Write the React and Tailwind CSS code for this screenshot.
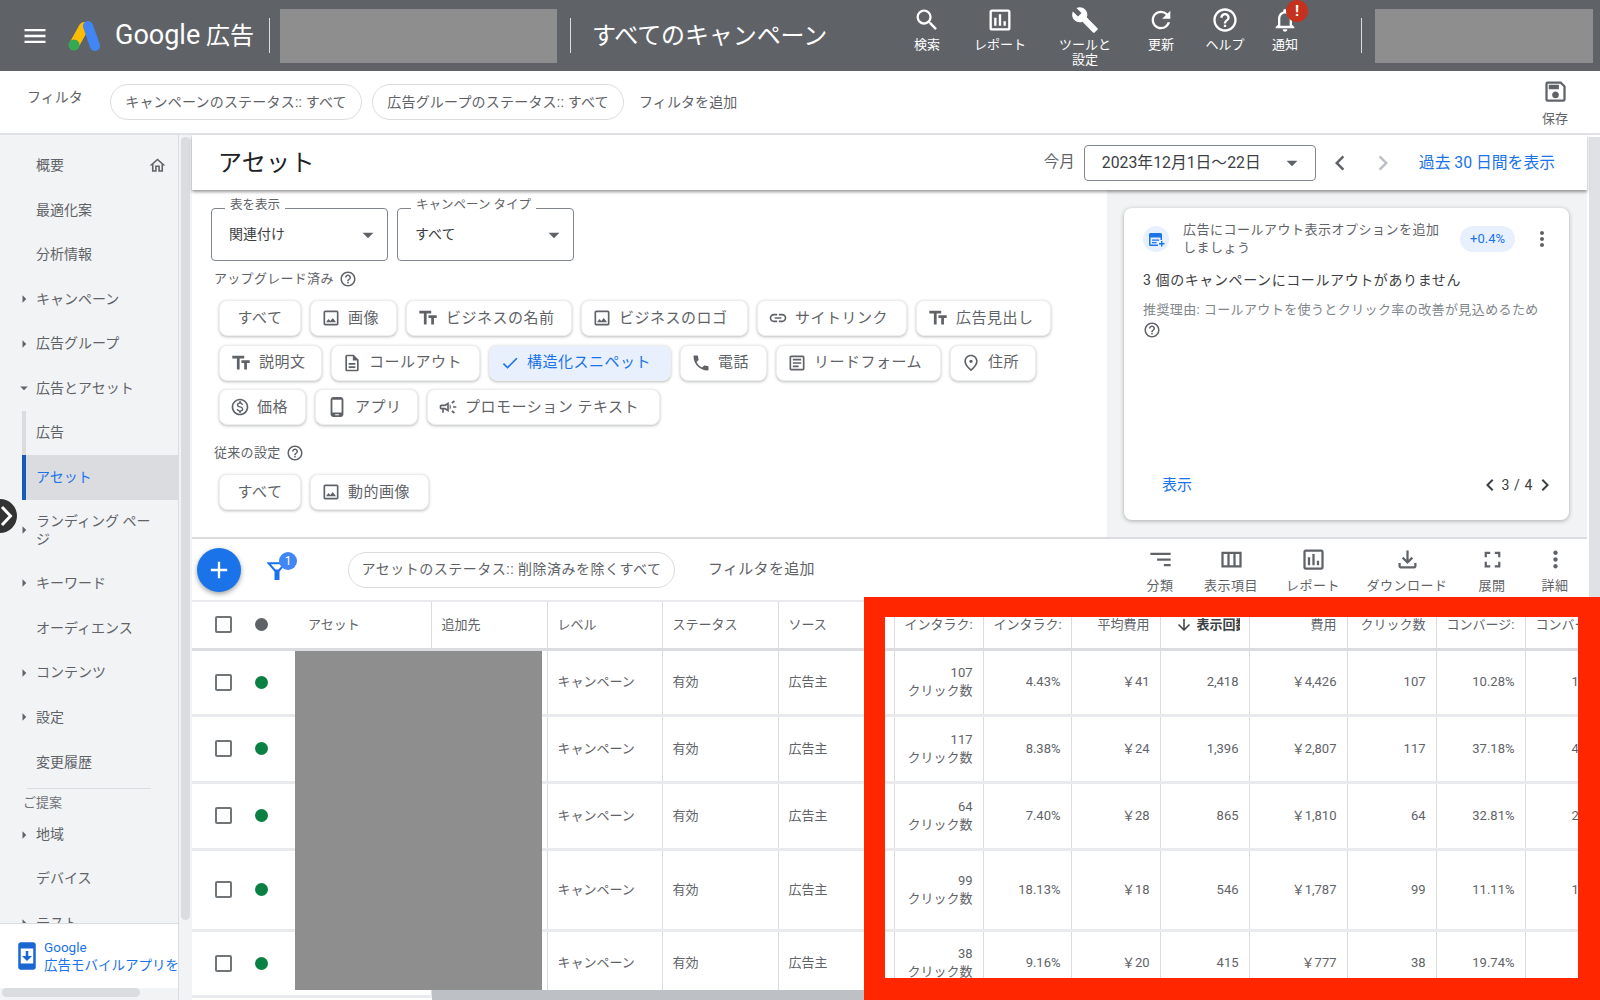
import {
  MdMenu,
  MdSearch,
  MdOutlineAssessment,
  MdBuild,
  MdRefresh,
  MdHelpOutline,
  MdNotificationsNone,
  MdOutlineSave,
  MdOutlineHome,
  MdArrowRight,
  MdArrowDropDown,
  MdChevronLeft,
  MdChevronRight,
  MdOutlineImage,
  MdTextFields,
  MdLink,
  MdOutlineDescription,
  MdCheck,
  MdPhone,
  MdOutlineArticle,
  MdOutlinePlace,
  MdOutlineMonetizationOn,
  MdOutlinePhoneAndroid,
  MdOutlineCampaign,
  MdMoreVert,
  MdAdd,
  MdSort,
  MdOutlineViewColumn,
  MdOutlineFileDownload,
  MdFullscreen,
  MdArrowDownward,
  MdSecurityUpdate,
} from 'react-icons/md'

const navTop = [
  { label: '概要', home: true },
  { label: '最適化案' },
  { label: '分析情報' },
  { label: 'キャンペーン', arrow: 'right' },
  { label: '広告グループ', arrow: 'right' },
  { label: '広告とアセット', arrow: 'down' },
]

const navBottom = [
  { label: 'キーワード', arrow: 'right' },
  { label: 'オーディエンス' },
  { label: 'コンテンツ', arrow: 'right' },
  { label: '設定', arrow: 'right' },
  { label: '変更履歴' },
]

const headerActions = [
  { label: '検索', icon: MdSearch, cls: 'w-[73px]' },
  { label: 'レポート', icon: MdOutlineAssessment, cls: 'w-[73px]' },
  { label: 'ツールと設定', icon: MdBuild, cls: 'w-[97px]', narrow: true },
  { label: '更新', icon: MdRefresh, cls: 'w-[55px]' },
  { label: 'ヘルプ', icon: MdHelpOutline, cls: 'w-[73px]' },
  { label: '通知', icon: MdNotificationsNone, cls: 'w-[47px]', badge: true },
]

const chipRows = [
  [
    { label: 'すべて', cls: 'w-[82px]' },
    { label: '画像', cls: 'w-[87px]', icon: MdOutlineImage, size: 20 },
    { label: 'ビジネスの名前', cls: 'w-[166px]', icon: MdTextFields },
    { label: 'ビジネスのロゴ', cls: 'w-[167px]', icon: MdOutlineImage, size: 20 },
    { label: 'サイトリンク', cls: 'w-[150px]', icon: MdLink, size: 20 },
    { label: '広告見出し', cls: 'w-[135px]', icon: MdTextFields },
  ],
  [
    { label: '説明文', cls: 'w-[103px]', icon: MdTextFields },
    { label: 'コールアウト', cls: 'w-[149px]', icon: MdOutlineDescription, size: 20 },
    { label: '構造化スニペット', cls: 'w-[182px]', icon: MdCheck, size: 20, active: true },
    { label: '電話', cls: 'w-[87px]', icon: MdPhone, size: 20 },
    { label: 'リードフォーム', cls: 'w-[165px]', icon: MdOutlineArticle, size: 20 },
    { label: '住所', cls: 'w-[86px]', icon: MdOutlinePlace, size: 20 },
  ],
  [
    { label: '価格', cls: 'w-[87px]', icon: MdOutlineMonetizationOn, size: 20 },
    { label: 'アプリ', cls: 'w-[103px]', icon: MdOutlinePhoneAndroid },
    { label: 'プロモーション テキスト', cls: 'w-[233px]', icon: MdOutlineCampaign, size: 20 },
  ],
]

const legacyChips = [
  { label: 'すべて', cls: 'w-[82px]' },
  { label: '動的画像', cls: 'w-[119px]', icon: MdOutlineImage, size: 20 },
]

const tools = [
  { label: '分類', icon: MdSort, cls: 'w-[62px]', flip: true },
  { label: '表示項目', icon: MdOutlineViewColumn, cls: 'w-[80px]' },
  { label: 'レポート', icon: MdOutlineAssessment, cls: 'w-[84px]' },
  { label: 'ダウンロード', icon: MdOutlineFileDownload, cls: 'w-[104px]' },
  { label: '展開', icon: MdFullscreen, cls: 'w-[66px]' },
  { label: '詳細', icon: MdMoreVert, cls: 'w-[60px]' },
]

const rows = [
  { h: 'h-[66px]', cv: '107', rate: '4.43%', avg: '\uFFE541', imp: '2,418', cost: '\uFFE54,426', click: '107', conv: '10.28%', more: '1' },
  { h: 'h-[67px]', cv: '117', rate: '8.38%', avg: '\uFFE524', imp: '1,396', cost: '\uFFE52,807', click: '117', conv: '37.18%', more: '4' },
  { h: 'h-[67px]', cv: '64', rate: '7.40%', avg: '\uFFE528', imp: '865', cost: '\uFFE51,810', click: '64', conv: '32.81%', more: '2' },
  { h: 'h-[81px]', cv: '99', rate: '18.13%', avg: '\uFFE518', imp: '546', cost: '\uFFE51,787', click: '99', conv: '11.11%', more: '1' },
  { h: 'h-[66px]', cv: '38', rate: '9.16%', avg: '\uFFE520', imp: '415', cost: '\uFFE5777', click: '38', conv: '19.74%', more: '' },
]

const NavItem = ({ label, arrow, home, rowCls = 'h-[44.5px]' }) => (
  <div className={`flex items-center text-[14px] text-[#5f6368] ${rowCls}`}>
    <span className="flex w-[36px] justify-end">
      {arrow === 'right' && <MdArrowRight size={18} className="mr-[3px]" />}
      {arrow === 'down' && <MdArrowDropDown size={18} className="mr-[3px]" />}
    </span>
    <span>{label}</span>
    {home && <MdOutlineHome size={19} className="ml-auto mr-[11px]" />}
  </div>
)

const Chip = ({ label, cls, icon: Icon, size = 22, active }) => (
  <div
    className={`flex h-[36px] items-center gap-[7px] rounded-lg border border-[#eceef0] text-[15px] tracking-[0.5px] shadow-[0_1px_3px_rgba(60,64,67,0.35)] ${cls} ${
      active ? 'bg-[#e8f0fe] text-[#1a73e8]' : 'bg-white text-[#5f6368]'
    } ${Icon ? 'pl-[10px]' : 'justify-center'}`}
  >
    {Icon && <Icon size={size} className="shrink-0" />}
    <span className="whitespace-nowrap">{label}</span>
  </div>
)

const Select = ({ label, value }) => (
  <div className="relative flex h-[53px] w-[177px] items-center rounded border border-[#80868b] pl-[17px] pr-[6px] text-[14px] text-[#3c4043]">
    <span className="absolute -top-[12px] left-[13px] bg-white px-[5px] text-[12.5px] leading-[16px] text-[#5f6368]">{label}</span>
    <span>{value}</span>
    <MdArrowDropDown size={26} className="ml-auto text-[#5f6368]" />
  </div>
)

const Checkbox = () => <div className="h-[17px] w-[17px] rounded-[2px] border-2 border-[#70757a]" />

const Th = ({ children, right }) => (
  <th className={`overflow-hidden whitespace-nowrap border-l border-[#dadce0] px-[10px] text-[13px] font-normal text-[#5f6368] ${right ? 'text-right' : 'text-left'}`}>
    {children}
  </th>
)

const Td = ({ children, right }) => (
  <td className={`overflow-hidden whitespace-nowrap border-l border-[#dadce0] px-[10px] text-[13px] text-[#5f6368] ${right ? 'text-right' : 'text-left'}`}>
    {children}
  </td>
)

const App = () => {
  return (
    <div className="relative flex h-[1000px] w-[1600px] flex-col overflow-hidden bg-white font-[Roboto,'Noto_Sans_CJK_JP',sans-serif]">
      {/* Top bar */}
      <header className="flex h-[71px] shrink-0 items-center bg-[#5f6368] pl-[21px] text-white">
        <MdMenu size={28} />
        <svg width="32" height="30" viewBox="0 0 32 30" className="ml-[19px]">
          <line x1="16" y1="6" x2="6" y2="24" stroke="#fbbc04" strokeWidth="10" strokeLinecap="round" />
          <line x1="20" y1="5" x2="27" y2="25" stroke="#4285f4" strokeWidth="10" strokeLinecap="round" />
          <circle cx="6" cy="24" r="5.5" fill="#34a853" />
        </svg>
        <span className="ml-[15px] w-[91px] text-[27px] leading-none">Google</span>
        <span className="text-[24px] leading-none">広告</span>
        <div className="ml-[15px] h-[35px] w-px bg-[#dadce0]" />
        <div className="ml-[10px] h-[54px] w-[277px] bg-[#8e8e8e]" />
        <div className="ml-[13px] h-[35px] w-px bg-[#dadce0]" />
        <span className="ml-[21px] w-[298.5px] text-[24px] leading-none tracking-[-0.1px]">すべてのキャンペーン</span>
        {headerActions.map(({ label, icon: Icon, cls, narrow, badge }) => (
          <div key={label} className={`flex h-full shrink-0 flex-col items-center pt-[6px] ${cls}`}>
            <div className="relative">
              <Icon size={28} />
              {badge && (
                <span className="absolute -top-[6px] left-[15px] flex h-[22px] w-[22px] items-center justify-center rounded-full bg-[#c5311f] text-[15px] font-bold">!</span>
              )}
            </div>
            <span className={`mt-[3px] text-center text-[13px] leading-[15px] ${narrow ? 'w-[56px]' : ''}`}>{label}</span>
          </div>
        ))}
        <div className="ml-[52.5px] h-[35px] w-px bg-[#dadce0]" />
        <div className="ml-[13px] h-[54px] w-[218px] bg-[#8e8e8e]" />
      </header>

      {/* Filter bar */}
      <div className="flex h-[64px] shrink-0 items-center border-b-2 border-[#e0e2e5] pl-[27px] text-[14px] text-[#5f6368]">
        <span className="-mt-[10px] w-[83px]">フィルタ</span>
        <div className="flex h-[36px] w-[252px] items-center justify-center rounded-full border border-[#dadce0] tracking-[0.2px]">キャンペーンのステータス:: すべて</div>
        <div className="ml-[10px] flex h-[36px] w-[252px] items-center justify-center rounded-full border border-[#dadce0] tracking-[0.2px]">広告グループのステータス:: すべて</div>
        <span className="ml-[15px] tracking-[0.1px]">フィルタを追加</span>
        <div className="ml-auto flex w-[90px] flex-col items-center pt-[3px]">
          <MdOutlineSave size={27} />
          <span className="mt-[4px] text-[13px]">保存</span>
        </div>
      </div>

      <div className="flex min-h-0 flex-1">
        {/* Side nav */}
        <aside className="flex w-[179px] shrink-0 flex-col border-r border-[#dadce0] bg-[#f2f3f5]">
          <nav className="min-h-0 flex-1 overflow-hidden pt-[8.5px]">
            {navTop.map((item) => (
              <NavItem key={item.label} {...item} />
            ))}
            <div className="ml-[22px] flex h-[44.5px] items-center border-l-4 border-[#dadce0] pl-[10px] text-[14px] text-[#5f6368]">広告</div>
            <div className="ml-[22px] flex h-[44.5px] items-center border-l-4 border-[#185abc] bg-[#dadce0] pl-[10px] text-[14px] text-[#1a73e8]">アセット</div>
            <div className="flex h-[61.5px] items-center text-[14px] leading-[18px] text-[#5f6368]">
              <span className="flex w-[36px] justify-end">
                <MdArrowRight size={18} className="mr-[3px]" />
              </span>
              <span className="w-[120px]">ランディング ページ</span>
            </div>
            {navBottom.map((item) => (
              <NavItem key={item.label} {...item} rowCls="h-[44.7px]" />
            ))}
            <div className="ml-[27px] mr-[27px] mt-[4px] h-px bg-[#dadce0]" />
            <div className="ml-[23px] mt-[5px] text-[13px] leading-[18px] text-[#70757a]">ご提案</div>
            <NavItem label="地域" arrow="right" rowCls="h-[44.3px]" />
            <NavItem label="デバイス" rowCls="h-[44.3px]" />
            <NavItem label="テスト" arrow="right" rowCls="h-[44.3px]" />
          </nav>
          <div className="flex h-[65px] shrink-0 items-center overflow-hidden border-t border-[#dadce0] bg-white pl-[12px] text-[13.5px] leading-[18px] text-[#1a73e8]">
            <MdSecurityUpdate size={30} className="shrink-0 text-[#1967d2]" />
            <div className="ml-[2px] whitespace-nowrap">
              Google
              <br />
              広告モバイルアプリを入手
            </div>
          </div>
          <div className="h-[12px] shrink-0 bg-[#f2f3f5]">
            <div className="ml-[2px] h-[9px] w-[138px] rounded-full bg-[#dadce0]" />
          </div>
        </aside>
        <div className="w-[13px] shrink-0 bg-[#f2f3f5] pl-[2px] pt-[2px]">
          <div className="h-[783px] w-[9px] rounded-full bg-[#dadce0]" />
        </div>

        <main className="flex min-w-0 flex-1 flex-col">
          {/* Page title row */}
          <div className="relative z-10 flex h-[55px] shrink-0 items-center pl-[26px] pr-[32px] shadow-[0_2px_3px_rgba(0,0,0,0.4)]">
            <h1 className="text-[24px] font-normal tracking-[0.3px] text-[#202124]">アセット</h1>
            <span className="ml-auto text-[15.5px] text-[#5f6368]">今月</span>
            <div className="ml-[9px] flex h-[36px] w-[232px] items-center rounded border border-[#80868b] pl-[17px] pr-[10px] text-[15.8px] text-[#3c4043]">
              2023年12月1日〜22日
              <MdArrowDropDown size={26} className="ml-auto text-[#5f6368]" />
            </div>
            <MdChevronLeft size={30} className="ml-[9px] text-[#5f6368]" />
            <MdChevronRight size={30} className="ml-[13px] text-[#bdc1c6]" />
            <span className="ml-[21px] text-[15.8px] text-[#1a73e8]">過去 30 日間を表示</span>
          </div>

          <div className="flex h-[347px] shrink-0">
            {/* Asset type chips */}
            <section className="w-[915px] shrink-0">
              <div className="ml-[19px] mt-[18px] flex gap-[9px]">
                <Select label="表を表示" value="関連付け" />
                <Select label="キャンペーン タイプ" value="すべて" />
              </div>
              <div className="ml-[22px] mt-[9px] flex h-[18px] items-center gap-[5px] text-[13px] tracking-[0.3px] text-[#5f6368]">
                アップグレード済み
                <MdHelpOutline size={18} />
              </div>
              <div className="ml-[27px] mt-[12px] flex flex-col gap-[8.5px]">
                {chipRows.map((row, i) => (
                  <div key={i} className="flex gap-[9px]">
                    {row.map((chip) => (
                      <Chip key={chip.label} {...chip} />
                    ))}
                  </div>
                ))}
              </div>
              <div className="ml-[22px] mt-[19px] flex h-[18px] items-center gap-[5px] text-[13px] tracking-[0.3px] text-[#5f6368]">
                従来の設定
                <MdHelpOutline size={18} />
              </div>
              <div className="ml-[27px] mt-[12px] flex gap-[9px]">
                {legacyChips.map((chip) => (
                  <Chip key={chip.label} {...chip} />
                ))}
              </div>
            </section>

            {/* Recommendation card */}
            <section className="flex-1 bg-[#f1f3f4] pl-[17px] pt-[18px]">
              <div className="flex h-[312px] w-[445px] flex-col rounded-lg bg-white shadow-[0_1px_4px_rgba(60,64,67,0.4)]">
                <div className="mt-[13px] flex h-[36px] items-center pl-[19px]">
                  <div className="flex h-[26px] w-[26px] shrink-0 items-center justify-center rounded-full bg-[#e8f0fe]">
                    <svg width="17" height="15" viewBox="0 0 17 15">
                      <path d="M1 4v8.5a1.5 1.5 0 0 0 1.5 1.5H10V12.5H2.5V5.5h10V8H14V2.5A1.5 1.5 0 0 0 12.5 1h-10A1.5 1.5 0 0 0 1 2.5z" fill="#1a73e8" />
                      <path d="M4 7.5h7v1.3H4zM4 10h4.5v1.3H4zM13 9h1.4v2H16.5v1.4h-2.1v2H13v-2h-2V11h2z" fill="#1a73e8" />
                    </svg>
                  </div>
                  <p className="ml-[14px] w-[265px] text-[13px] leading-[18px] tracking-[0.5px] text-[#5f6368]">広告にコールアウト表示オプションを追加しましょう</p>
                  <div className="ml-[12px] flex h-[26px] w-[55px] items-center justify-center rounded-full bg-[#e8f0fe] text-[13px] text-[#1a73e8]">+0.4%</div>
                  <MdMoreVert size={24} className="ml-[15px] text-[#5f6368]" />
                </div>
                <p className="mt-[13px] pl-[19px] text-[14px] leading-[20px] tracking-[0.6px] text-[#3c4043]">3 個のキャンペーンにコールアウトがありません</p>
                <p className="mt-[10px] w-[429px] pl-[19px] text-[13px] leading-[19px] tracking-[0.4px] text-[#80868b]">
                  推奨理由: コールアウトを使うとクリック率の改善が見込めるため
                  <MdHelpOutline size={18} className="inline-block text-[#5f6368]" />
                </p>
                <div className="mb-[20px] mt-auto flex h-[30px] items-center pl-[38px] pr-[12px]">
                  <span className="text-[15px] text-[#1a73e8]">表示</span>
                  <div className="ml-auto flex items-center text-[14px] tracking-[0.6px] text-[#3c4043]">
                    <MdChevronLeft size={24} />
                    <span>3 / 4</span>
                    <MdChevronRight size={24} />
                  </div>
                </div>
              </div>
            </section>
          </div>

          {/* Table toolbar */}
          <div className="flex h-[63px] shrink-0 items-center border-t-2 border-[#dadce0] pl-[5px] pr-[2px]">
            <div className="flex h-[44px] w-[44px] shrink-0 items-center justify-center rounded-full bg-[#1a73e8] text-white shadow-[0_2px_5px_rgba(60,64,67,0.5)]">
              <MdAdd size={28} />
            </div>
            <div className="relative ml-[26px] mt-[2px]">
              <svg width="20" height="18" viewBox="0 0 20 18">
                <path d="M1.5 1.2h17L12 8.5H8z" fill="none" stroke="#1a73e8" strokeWidth="2" />
                <path d="M7.5 8h5v10h-5z" fill="#1a73e8" />
              </svg>
              <span className="absolute -right-[10px] -top-[10px] flex h-[18px] w-[18px] items-center justify-center rounded-full bg-[#4285f4] text-[12px] text-white">1</span>
            </div>
            <div className="ml-[61px] flex h-[36px] w-[327px] items-center justify-center rounded-full border border-[#dadce0] text-[14px] tracking-[0.5px] text-[#5f6368]">アセットのステータス:: 削除済みを除くすべて</div>
            <span className="ml-[33px] text-[15px] tracking-[0.3px] text-[#5f6368]">フィルタを追加</span>
            <div className="ml-auto flex">
              {tools.map(({ label, icon: Icon, cls, flip }) => (
                <div key={label} className={`flex flex-col items-center text-[#5f6368] ${cls}`}>
                  <Icon size={27} className={flip ? '-scale-x-100' : ''} />
                  <span className="mt-[5px] text-[13px] leading-[16px] tracking-[0.5px]">{label}</span>
                </div>
              ))}
            </div>
          </div>

          {/* Table */}
          <div className="relative min-h-0 flex-1 overflow-hidden border-t-2 border-[#e8eaed]">
            <table className="w-[1448px] table-fixed border-collapse">
              <colgroup>
                <col className="w-[54px]" />
                <col className="w-[30px]" />
                <col className="w-[155px]" />
                <col className="w-[116px]" />
                <col className="w-[115px]" />
                <col className="w-[116px]" />
                <col className="w-[116px]" />
                <col className="w-[89px]" />
                <col className="w-[88px]" />
                <col className="w-[89px]" />
                <col className="w-[89px]" />
                <col className="w-[98px]" />
                <col className="w-[89px]" />
                <col className="w-[89px]" />
                <col className="w-[115px]" />
              </colgroup>
              <thead>
                <tr className="h-[47px] border-b-[3px] border-[#dadce0]">
                  <th className="pl-[23px]">
                    <Checkbox />
                  </th>
                  <th className="pl-[9px]">
                    <div className="h-[13px] w-[13px] rounded-full bg-[#5f6368]" />
                  </th>
                  <th className="pl-[32px] text-left text-[13px] font-normal text-[#5f6368]">アセット</th>
                  <Th>追加先</Th>
                  <Th>レベル</Th>
                  <Th>ステータス</Th>
                  <Th>ソース</Th>
                  <Th right>インタラク:</Th>
                  <Th right>インタラク:</Th>
                  <Th right>平均費用</Th>
                  <th className="overflow-hidden whitespace-nowrap border-l border-[#dadce0] pl-[14px] pr-[9px] text-left text-[13px] font-bold text-[#3c4043]">
                    <div className="flex items-center overflow-hidden">
                      <MdArrowDownward size={18} className="mr-[4px] shrink-0" />
                      表示回数
                    </div>
                  </th>
                  <Th right>費用</Th>
                  <Th right>クリック数</Th>
                  <Th right>コンバージ:</Th>
                  <Th>コンバージ</Th>
                </tr>
              </thead>
              <tbody>
                {rows.map((row) => (
                  <tr key={row.cost} className={`border-b-[3px] border-[#e8eaed] ${row.h}`}>
                    <td className="pl-[23px]">
                      <Checkbox />
                    </td>
                    <td className="pl-[9px]">
                      <div className="h-[13px] w-[13px] rounded-full bg-[#0b8043]" />
                    </td>
                    <td />
                    <Td />
                    <Td>キャンペーン</Td>
                    <Td>有効</Td>
                    <Td>広告主</Td>
                    <td className="overflow-hidden whitespace-nowrap border-l border-[#dadce0] px-[10px] text-right text-[13px] leading-[18px] text-[#5f6368]">
                      {row.cv}
                      <br />
                      クリック数
                    </td>
                    <Td right>{row.rate}</Td>
                    <Td right>{row.avg}</Td>
                    <Td right>{row.imp}</Td>
                    <Td right>{row.cost}</Td>
                    <Td right>{row.click}</Td>
                    <Td right>{row.conv}</Td>
                    <td className="border-l border-[#dadce0] pl-[46px] text-[13px] text-[#5f6368]">{row.more}</td>
                  </tr>
                ))}
              </tbody>
            </table>

            {/* redacted asset column */}
            <div className="absolute left-[103px] top-[49px] h-[339px] w-[247px] bg-[#8e8e8e]" />
            {/* horizontal scrollbar */}
            <div className="absolute bottom-0 left-[240px] h-[10px] w-[440px] bg-[#bdc1c6]" />
          </div>
        </main>

        {/* Page scrollbar */}
        <div className="w-[13px] shrink-0 pl-[2px] pt-[2px]">
          <div className="h-full w-[11px] bg-[#dfe1e5]" />
        </div>
      </div>

      {/* Collapsed panel toggle */}
      <div className="absolute left-0 top-[499px] h-[34px] w-[17px] rounded-r-full bg-[#333333]">
        <svg width="17" height="34" viewBox="0 0 17 34">
          <path d="M2 8l8.5 9L2 26" fill="none" stroke="white" strokeWidth="3" />
        </svg>
      </div>

      {/* Red annotation frame */}
      <div className="absolute left-[864px] top-[597px] h-[403px] w-[736px] border-b-[22px] border-l-[21px] border-r-[22px] border-t-[20px] border-[#ff2600]" />
    </div>
  )
}

export default App
